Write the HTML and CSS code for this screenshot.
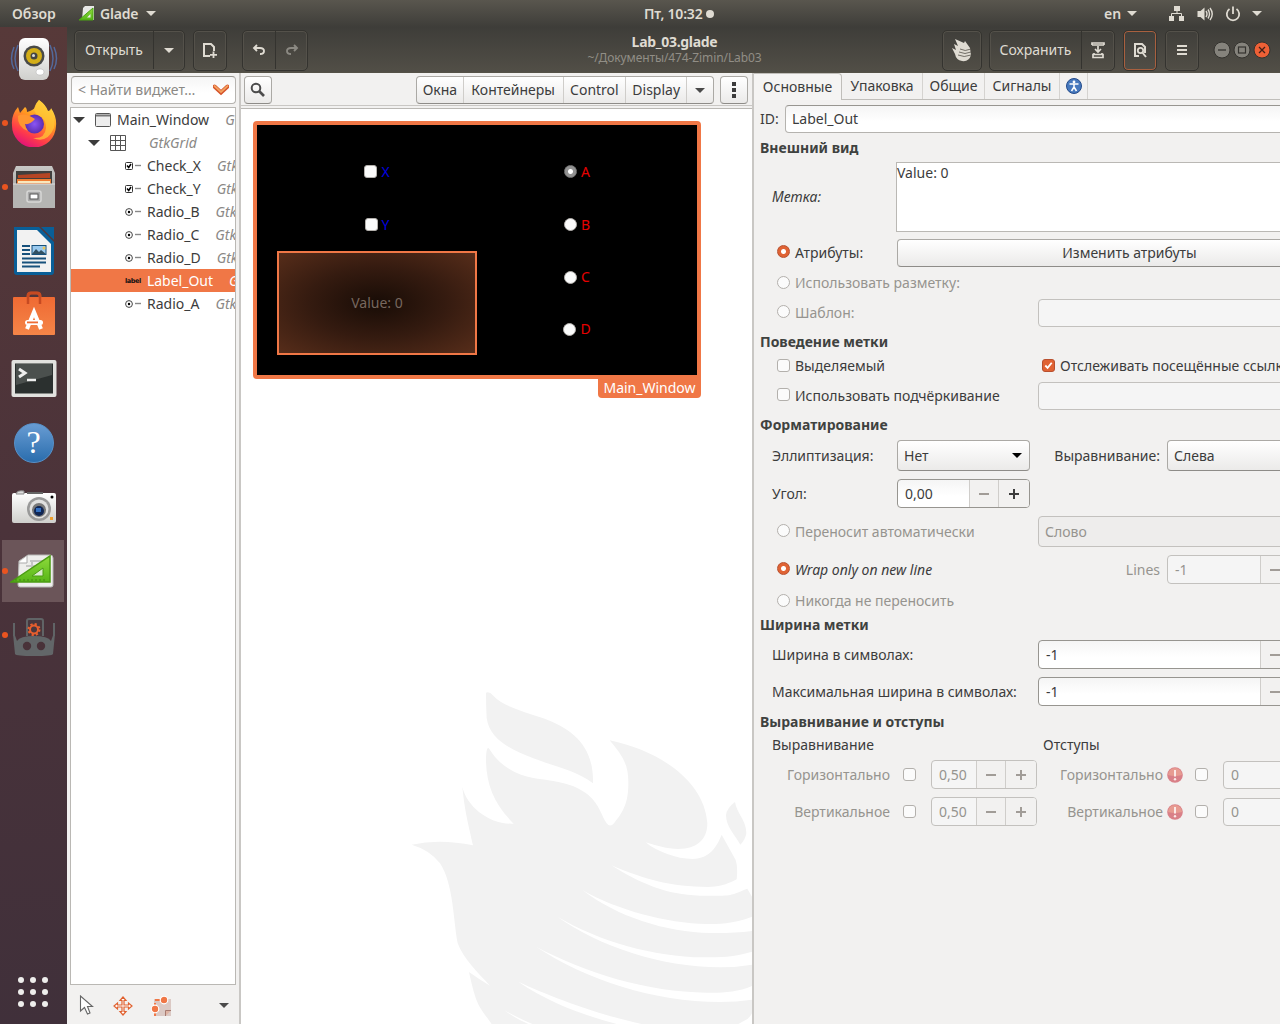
FILE: index.html
```html
<!DOCTYPE html>
<html lang="ru">
<head>
<meta charset="utf-8">
<title>Lab_03.glade</title>
<link rel="stylesheet" href="styles.css">
</head>
<body>
<svg class="defs" width="0" height="0">
  <defs>
    <linearGradient id="white" x2="0" y2="1"><stop stop-color="#fff"/><stop offset="1" stop-color="#cfcfcc"/></linearGradient>
    <linearGradient id="grey" x2="0" y2="1"><stop stop-color="#c8c8c6"/><stop offset="1" stop-color="#8f8f8d"/></linearGradient>
    <linearGradient id="fire" x1=".8" y1="0" x2=".3" y2="1"><stop stop-color="#fff44f"/><stop offset=".4" stop-color="#ff9a20"/><stop offset=".75" stop-color="#ff3b4a"/><stop offset="1" stop-color="#e0107c"/></linearGradient>
    <radialGradient id="globe"><stop stop-color="#8a55f5"/><stop offset="1" stop-color="#5b2db0"/></radialGradient>
    <linearGradient id="blue" x2="0" y2="1"><stop stop-color="#699fd6"/><stop offset="1" stop-color="#2a6dae"/></linearGradient>
    <linearGradient id="green" x2="0" y2="1"><stop stop-color="#8edb3c"/><stop offset="1" stop-color="#58b618"/></linearGradient>
    <linearGradient id="bag" x2="0" y2="1"><stop stop-color="#ef6a33"/><stop offset="1" stop-color="#f58548"/></linearGradient>
    <symbol id="down" viewBox="0 0 10 5"><path d="M0 0H10L5 5Z" fill="currentColor"/></symbol>
    <symbol id="check-row" viewBox="0 0 16 8"><rect x=".5" y=".5" width="7" height="7" rx="1" fill="#fff" stroke="#333"/><path d="M2 3.5L3.7 5.5L6 2" stroke="#000" stroke-width="1.5" fill="none"/><path d="M10 3.5H16" stroke="#888" stroke-width="1.4"/></symbol>
    <symbol id="radio-row" viewBox="0 0 16 8"><circle cx="4" cy="4" r="3.4" fill="#fff" stroke="#444"/><circle cx="4" cy="4" r="1.2"/><path d="M10 3.5H16" stroke="#888" stroke-width="1.4"/></symbol>
    <symbol id="alert" viewBox="0 0 16 16"><circle cx="8" cy="8" r="7.8" fill="#d98088"/><path d="M1 8A7 7 0 0 1 15 8Q8 10 1 8" fill="#e79b91"/><path d="M8 3V9.5" stroke="#fbe9e7" stroke-width="2"/><circle cx="8" cy="12.2" r="1.2" fill="#fbe9e7"/></symbol>
  </defs>
</svg>
<div class="desktop">
  <header class="topbar">
    <span class="activities">Обзор</span>
    <svg class="app-icon" viewBox="0 0 16 16"><path d="M4 2L6 0H15V14H3Z" fill="#e8e8e6"/><path d="M0 14L14 2V14Z" fill="url(#green)" stroke="#4aa312"/><path d="M8 11.500L11.500 8V11.500Z" fill="#eee"/></svg>
    <span class="app-name">Glade</span>
    <svg class="arrow" viewBox="0 0 10 5"><use href="#down"/></svg>
    <span class="clock">Пт, 10:32 <i></i></span>
    <span class="lang">en</span>
    <svg class="arrow" viewBox="0 0 10 5"><use href="#down"/></svg>
    <svg class="net" viewBox="0 0 16 16" fill="#dfdbd2"><path d="M5 0H11V5H5ZM0 10H5V15H0ZM10 10H15V15H10Z"/><path d="M8 5V7.500M2.500 10V7.500H12.500V10" stroke="#dfdbd2" fill="none"/></svg>
    <svg class="vol" viewBox="0 0 16 16" fill="#dfdbd2"><path d="M0 5H3L7 1.500V14.500L3 11H0Z"/><path d="M8.500 5Q10.500 8 8.500 11M10.500 3.500Q13.500 8 10.500 12.500M12.500 2Q17 8 12.500 14" stroke="#dfdbd2" stroke-width="1.400" fill="none"/></svg>
    <svg class="power" viewBox="0 0 16 16" fill="none" stroke="#dfdbd2" stroke-width="1.800"><path d="M4.500 3A6.200 6.200 0 1 0 11.500 3M8 .500V8"/></svg>
    <svg class="arrow" viewBox="0 0 10 5"><use href="#down"/></svg>
  </header>

  <nav class="dock">
    <div class="dock-item"><svg viewBox="0 0 48 48"><path d="M4 12Q-1 24 4 34M8 10Q2 24 8 36M44 12Q49 24 44 34M40 10Q46 24 40 36" stroke="#53699b" stroke-width="1.500" fill="none"/><rect x="9" y="3" width="30" height="42" rx="6" fill="url(#white)"/><circle cx="24" cy="21" r="10.500" fill="#494a48"/><circle cx="24" cy="21" r="8" fill="#d3ae18"/><circle cx="24" cy="21" r="3.500" fill="#444"/><circle cx="23.500" cy="20.500" r="1.500" fill="#ddd"/><rect x="26" y="34" width="8" height="6" rx="3" fill="#fff" stroke="#bbb" stroke-width=".6"/></svg></div>
    <div class="dock-item running"><svg viewBox="0 0 48 48"><path d="M29 1Q36 6 38 12Q41 12 41 9Q47 18 46 27A22 22 0 0 1 2 26Q1 16 8 8L10 14L15 8Q17 9 17 13Q24 11 25 8Q26 4 29 1Z" fill="url(#fire)"/><circle cx="24.500" cy="25" r="9.500" fill="url(#globe)"/><path d="M29 1Q19 12 30 17Q36 20 36 29Q35 40 23 39Q37 45 44 29Q46 22 41 10L38 13Q35 5 29 1Z" fill="#ffc536" opacity=".75"/><path d="M8 17Q14 13 25 20Q20 26 15 25Q15 28 18 32Q7 28 8 17Z" fill="#ff9630"/></svg></div>
    <div class="dock-item running"><svg viewBox="0 0 48 48"><path d="M6 3H42L45 10V44H3V10Z" fill="url(#grey)"/><rect x="6" y="8" width="36" height="15" fill="#413f3d"/><path d="M8 12L40 10V15H8Z" fill="#b54524"/><path d="M7 16H41V23H7Z" fill="#ef7e33"/><path d="M8 18H40V20H8Z" fill="#f8e7bd"/><path d="M3 21H45V45H3Z" fill="#b5b5b3"/><path d="M3 21H45" stroke="#ddd"/><rect x="17" y="28" width="14" height="11" rx="2" fill="#aaa" stroke="#d8d8d6" stroke-width="1.500"/><rect x="20" y="31" width="8" height="5" fill="#fff" stroke="#555"/></svg></div>
    <div class="dock-item"><svg viewBox="0 0 48 48"><path d="M4 0H29L44 15V45Q44 48 41 48H7Q4 48 4 45Z" fill="#095f98"/><path d="M31 0H44V13Z" fill="#095f98"/><path d="M7 3H27L41 17V45H7Z" fill="#f2f2f2"/><path d="M12 19H20M12 23H20M12 27H20M12 31.500H36M12 35.500H36M12 39.500H30" stroke="#17517c" stroke-width="2"/><rect x="22" y="18.500" width="14" height="9" fill="#99c9ee" stroke="#17517c"/><path d="M22 27L26 22L29 25L31 23L36 27Z" fill="#315062"/><circle cx="34" cy="21" r="1.500" fill="#ecc657"/></svg></div>
    <div class="dock-item"><svg viewBox="0 0 48 48"><path d="M18 14V5Q18 2 21 2H27Q30 2 30 5V14" stroke="#c64a22" stroke-width="3" fill="none"/><rect x="3" y="6" width="42" height="38" rx="1" fill="url(#bag)"/><path d="M18 13V5Q18 2 21 2H27Q30 2 30 5V13" stroke="#c64a22" stroke-width="2.500" fill="none"/><path d="M17 38L24 21L31 38" fill="none" stroke="#fff" stroke-width="4"/><rect x="15" y="29" width="18" height="5" rx="2.500" fill="#fff"/><rect x="17" y="30.500" width="11" height="1.800" fill="#ee6c35"/></svg></div>
    <div class="dock-item"><svg viewBox="0 0 48 48"><rect x="1.500" y="5" width="45" height="37" rx="2" fill="#e2e2df"/><rect x="5" y="8.500" width="38" height="30" fill="#2b302f"/><path d="M6 9H42V20L6 30Z" fill="#4b504e"/><path d="M9 14L15 18L9 22" fill="none" stroke="#eee" stroke-width="3"/><path d="M17 25H26" stroke="#eee" stroke-width="2.500"/></svg></div>
    <div class="dock-item"><div class="help-icon">?</div></div>
    <div class="dock-item"><svg viewBox="0 0 48 48"><rect x="2" y="10" width="44" height="30" rx="2" fill="url(#white)"/><path d="M6 11Q7 7 14 8V11Z" fill="#ddd" stroke="#888"/><path d="M17 10H33" stroke="#666" stroke-width="2"/><circle cx="29" cy="26" r="12" fill="#999"/><circle cx="29" cy="26" r="9.500" fill="#e0e0df"/><circle cx="29" cy="27" r="7" fill="#777"/><circle cx="29" cy="28" r="5" fill="#102654"/><path d="M26 25H31V29H26Z" fill="#326fc1"/><circle cx="42" cy="14" r="1.500"/><rect x="40" y="34" width="3" height="3" fill="#f0a02d"/></svg></div>
    <div class="dock-item running active"><svg viewBox="0 0 48 48"><path d="M9 14L18 8H40Q43 8 43 11V38Q43 40 41 40H10Q8 40 8 38Z" fill="#eeeeec" stroke="#b8b8b6"/><path d="M17 9V16H9" fill="#fff" stroke="#aaa"/><path d="M20 14H34M16 19H30M22 13V26" stroke="#c5c5c4" stroke-width="2"/><path d="M1 35L40 9V35Z" fill="url(#green)" stroke="#4b9c12" stroke-width="1.500"/><path d="M22 29L33 21V29Z" fill="#dcebd1" stroke="#4b9c12"/><path d="M6 34V32M10 34V32M14 34V32M18 34V32M22 34V32M26 34V32M30 34V32M34 34V32" stroke="#3d7c12" stroke-width=".8"/></svg></div>
    <div class="dock-item running"><svg viewBox="0 0 48 48"><path d="M5 43L3 23H4.500L7 30Q10 25 24 25Q38 25 41 30L43.500 23H45L43 43Q42 45 24 45Q6 45 5 43Z" fill="#626668"/><path d="M4 12V25M44 12V25M17 25V10Q17 8 19 8H31Q33 8 33 10V25" fill="#49383e" stroke="#606466" stroke-width="2"/><circle cx="24" cy="18.500" r="4" fill="none" stroke="#e85f2e" stroke-width="2"/><circle cx="24" cy="18.500" r="5.500" fill="none" stroke="#e85f2e" stroke-width="2" stroke-dasharray="2.200 2.120"/><circle cx="17" cy="35" r="4.200" fill="#493239"/><circle cx="31" cy="35" r="4.200" fill="#493239"/></svg></div>
    <svg class="apps" viewBox="0 0 30 30" fill="#eeeeec"><circle cx="3" cy="3" r="3"/><circle cx="15" cy="3" r="3"/><circle cx="27" cy="3" r="3"/><circle cx="3" cy="15" r="3"/><circle cx="15" cy="15" r="3"/><circle cx="27" cy="15" r="3"/><circle cx="3" cy="27" r="3"/><circle cx="15" cy="27" r="3"/><circle cx="27" cy="27" r="3"/></svg>
  </nav>

  <div class="window">
    <header class="headerbar">
      <div class="hgroup open"><span class="hopen">Открыть</span><span class="hdrop"><svg class="arrow" viewBox="0 0 10 5"><use href="#down"/></svg></span></div>
      <div class="hgroup new"><svg width="16" height="16" viewBox="0 0 16 16" fill="none" stroke="#dfdbd2" stroke-width="2"><path d="M8 14H2V2H9L12 5V9" /><path d="M11.500 9.500V16M8 12.800H15" stroke-width="1.800"/></svg></div>
      <div class="hgroup undo"><span><svg width="14" height="12" viewBox="0 0 14 12" fill="none" stroke="#dfdbd2" stroke-width="1.900"><path d="M5 1L2 4L5 7M2 4H8Q12 4 12 7Q12 10 8 10"/></svg></span><span class="dim"><svg width="14" height="12" viewBox="0 0 14 12" fill="none" stroke="#8b8982" stroke-width="1.900"><path d="M9 1L12 4L9 7M12 4H6Q2 4 2 7Q2 10 6 10"/></svg></span></div>
      <div class="titles"><b>Lab_03.glade</b><small>~/Документы/474-Zimin/Lab03</small></div>
      <div class="hgroup logo"><svg width="20" height="24" viewBox="0 0 20 24"><path d="M3 1L12 5L13 3L18 10L19 17Q17 24 10 23Q4 22 3 16L0 10L4 12L2 6L6 8Z" fill="#dfdbd2"/><path d="M8 11Q13 14 19 11M7 14Q13 17 19 14M6 17Q12 20 19 17" fill="none" stroke="#55524a" stroke-width=".8"/></svg></div>
      <div class="hgroup save"><span class="hsave">Сохранить</span><span class="hsaveas"><svg width="14" height="17" viewBox="0 0 14 17" fill="none" stroke="#dfdbd2" stroke-width="1.700"><path d="M1 3V1H13V3M1 3H13M7 4V10M4 7L7 10L10 7M3 11V12M11 11V12M2 12.500H12V15.500H2Z"/></svg></span></div>
      <div class="hgroup preview"><svg width="14" height="16" viewBox="0 0 14 16"><path d="M6 14H2V2H9L12 5V11" fill="none" stroke="#dfdbd2" stroke-width="2"/><circle cx="7.500" cy="8.500" r="2.700" fill="none" stroke="#dfdbd2" stroke-width="1.800"/><path d="M9 10L13 15" stroke="#dfdbd2" stroke-width="2"/></svg></div>
      <div class="hgroup menu"><svg width="10" height="12" viewBox="0 0 10 12"><path d="M0 2H10M0 6H10M0 10H10" stroke="#dfdbd2" stroke-width="2"/></svg></div>
      <div class="winbtns">
        <svg viewBox="0 0 18 18"><circle cx="9" cy="9" r="8" fill="#85837c" stroke="#34332f"/><path d="M5 9H13" stroke="#34332f" stroke-width="1.300"/></svg>
        <svg viewBox="0 0 18 18"><circle cx="9" cy="9" r="8" fill="#85837c" stroke="#34332f"/><rect x="5.500" y="6" width="7" height="6" fill="none" stroke="#34332f" stroke-width="1.200"/></svg>
        <svg viewBox="0 0 18 18"><circle cx="9" cy="9" r="8" fill="#ed6036" stroke="#34332f"/><path d="M6 6L12 12M12 6L6 12" stroke="#402018" stroke-width="1.300"/></svg>
      </div>
    </header>

    <div class="panes">
      <aside class="inspector">
        <div class="entry search"><span>&lt; Найти виджет…</span><svg width="16" height="12" viewBox="0 0 16 12"><path d="M1.500 2.500L8 8.500L14.500 2.500" fill="none" stroke="#d5522a" stroke-width="4" stroke-linecap="round"/><path d="M1.500 2L8 8L14.500 2" fill="none" stroke="#f2a15f" stroke-width="1.800" stroke-linecap="round"/></svg></div>
        <div class="tree">
          <div class="trow l0"><svg class="exp" viewBox="0 0 12 6"><path d="M0 0H12L6 6Z" fill="#3c3c3c"/></svg><svg class="tico" viewBox="0 0 16 14"><rect x=".5" y=".5" width="15" height="13" rx="1" fill="#ededed" stroke="#555"/><path d="M1 2.500H15" stroke="#777" stroke-width="2"/></svg><span class="tname">Main_Window</span><em>GtkWindow</em></div>
          <div class="trow l1"><svg class="exp" viewBox="0 0 12 6"><path d="M0 0H12L6 6Z" fill="#3c3c3c"/></svg><svg class="tico grid" viewBox="0 0 16 16"><path d="M.5 .5H15.500V15.500H.5ZM5.500 .5V15.500M10.500 .5V15.500M.5 5.500H15.500M.5 10.500H15.500" fill="none" stroke="#555"/></svg><em>GtkGrid</em></div>
          <div class="trow l2"><svg class="wico" viewBox="0 0 16 8"><use href="#check-row"/></svg><span class="tname">Check_X</span><em>GtkCheckButton</em></div>
          <div class="trow l2"><svg class="wico" viewBox="0 0 16 8"><use href="#check-row"/></svg><span class="tname">Check_Y</span><em>GtkCheckButton</em></div>
          <div class="trow l2"><svg class="wico" viewBox="0 0 16 8"><use href="#radio-row"/></svg><span class="tname">Radio_B</span><em>GtkRadioButton</em></div>
          <div class="trow l2"><svg class="wico" viewBox="0 0 16 8"><use href="#radio-row"/></svg><span class="tname">Radio_C</span><em>GtkRadioButton</em></div>
          <div class="trow l2"><svg class="wico" viewBox="0 0 16 8"><use href="#radio-row"/></svg><span class="tname">Radio_D</span><em>GtkRadioButton</em></div>
          <div class="trow l2 selected"><b class="mini">label</b><span class="tname">Label_Out</span><em>GtkLabel</em></div>
          <div class="trow l2"><svg class="wico" viewBox="0 0 16 8"><use href="#radio-row"/></svg><span class="tname">Radio_A</span><em>GtkRadioButton</em></div>
        </div>
        <div class="tools">
          <svg width="16" height="21" viewBox="0 0 16 21"><path d="M1.500 1V16L5.500 12.500L8.500 19L11 18L8.500 11.500H13.500Z" fill="#fff" stroke="#666" stroke-width="1.100"/></svg>
          <svg width="20" height="20" viewBox="0 0 20 20"><path d="M10 1L13 4.500H11V9H15.500V7L19 10L15.500 13V11H11V15.500H13L10 19L7 15.500H9V11H4.500V13L1 10L4.500 7V9H9V4.500H7Z" fill="#fff" stroke="#e0612f" stroke-width="1.200"/></svg>
          <svg width="20" height="20" viewBox="0 0 20 20"><path d="M3 3H20V20H3Z" fill="#dbc9c4"/><path d="M4 20V4H19" stroke="#f07746" stroke-width="2" stroke-dasharray="5 3" fill="none"/><path d="M14.500 20V14.500H20" fill="#dfb3a3" stroke="#a77b70"/><circle cx="13" cy="4" r="3.800" fill="#f07746" stroke="#fff" stroke-width="1.200"/><circle cx="4" cy="13" r="3.800" fill="#f07746" stroke="#fff" stroke-width="1.200"/></svg>
          <svg class="arrow dark" viewBox="0 0 10 5"><use href="#down"/></svg>
        </div>
      </aside>

      <main class="editor">
        <div class="palette">
          <div class="btn find"><svg width="16" height="16" viewBox="0 0 16 16"><circle cx="6" cy="6" r="4.300" fill="none" stroke="#4c4c4c" stroke-width="2"/><path d="M9 9L14 14" stroke="#4c4c4c" stroke-width="2.600"/></svg></div>
          <div class="btn cats"><span>Окна</span><span>Контейнеры</span><span>Control</span><span>Display</span><span><svg class="arrow dark" viewBox="0 0 10 5"><use href="#down"/></svg></span></div>
          <div class="btn more"><svg width="4" height="16" viewBox="0 0 4 16"><path d="M0 0H4V4H0ZM0 6H4V10H0ZM0 12H4V16H0Z" fill="#3c3c3c"/></svg></div>
        </div>
        <div class="canvas">
          <div class="design">
            <div class="cell blue"><i class="chk"></i>X</div><div class="cell red"><i class="rad off"></i>A</div>
            <div class="cell blue"><i class="chk"></i>Y</div><div class="cell red"><i class="rad"></i>B</div>
            <div class="picked">Value: 0</div><div class="cell red"><i class="rad"></i>C</div>
            <div class="cell red"><i class="rad"></i>D</div>
          </div>
          <div class="nametag">Main_Window</div>
          <svg class="watermark" viewBox="0 0 1056 1032" fill="#f2f2f2">
            <path d="M258 38Q268 34 280 47C310 80 370 94 430 115C520 148 582 200 579 310C530 272 480 265 400 235C330 207 270 180 260 115Q258 80 258 38Z"/>
            <path d="M1005 366C1010 400 1039 420 1039 460Q1036 480 1021 494C1005 465 978 440 978 405Q980 385 1005 366Z"/>
            <path d="M268 207C300 260 350 285 400 294C470 305 520 308 565 345C600 375 605 410 620 430Q630 443 642 430C670 395 685 370 685 310C686 250 665 225 629 181C790 215 915 310 922 430C922 480 890 507 835 507C800 507 770 497 737 487C770 515 830 537 878 537C930 535 950 500 965 464L1007 540Q1014 560 1010 598C980 615 950 621 925 621C810 620 740 600 634 556C720 610 800 645 900 647C1000 648 985 648 1042 626L1056 650V710C1000 732 950 732 920 732C800 730 650 690 547 630C650 710 800 757 930 759Q1000 760 1056 753V815C1000 832 960 832 910 832C760 830 600 785 472 710C600 800 780 860 960 862Q1010 862 1056 854V918C1010 938 960 939 920 938C740 935 560 880 408 800C560 900 760 965 960 966Q1010 966 1056 959V1000Q1045 1020 1030 1024L1015 1032H725C600 1005 450 950 355 905C450 970 550 1005 650 1032H397Q350 1012 312 990Q350 1018 385 1032H275C235 975 230 980 207 876Q240 900 270 917C230 875 190 835 173 790C160 720 160 610 120 550Q90 510 35 494Q120 475 219 496C205 430 195 400 187 320C200 380 270 435 341 431C280 370 257 310 258 230Q260 195 268 207Z"/>
          </svg>
        </div>
      </main>

      <section class="props">
        <div class="tabs">
          <span class="tab current">Основные</span><span class="tab">Упаковка</span><span class="tab">Общие</span><span class="tab">Сигналы</span>
          <span class="tab"><svg width="16" height="16" viewBox="0 0 16 16"><circle cx="8" cy="8" r="7.500" fill="#4678bd" stroke="#244b8a"/><circle cx="8" cy="4" r="1.400" fill="#fff"/><path d="M3.500 6H12.500M8 6V9L5.500 13M8 9L10.500 13" stroke="#fff" stroke-width="1.500" fill="none"/></svg></span>
        </div>
        <div class="form">
          <div class="row"><span class="id">ID:</span><div class="entry fill">Label_Out</div></div>
          <div class="row"><b>Внешний вид</b></div>
          <div class="row in"><em class="c1">Метка:</em><div class="text">Value: 0</div></div>
          <div class="row in"><span class="c1"><i class="rad on"></i>Атрибуты:</span><div class="btn attrs">Изменить атрибуты</div></div>
          <div class="row in dim"><span class="c2"><i class="rad"></i>Использовать разметку:</span></div>
          <div class="row in dim"><span class="c2"><i class="rad"></i>Шаблон:</span><div class="entry fill off"></div></div>
          <div class="row"><b>Поведение метки</b></div>
          <div class="row in"><span class="c2"><i class="chk"></i>Выделяемый</span><i class="chk on visited"><svg viewBox="0 0 12 12"><path d="M2.500 6L5 8.500L9.500 3" stroke="#fff" stroke-width="2" fill="none"/></svg></i>Отслеживать посещённые ссылки</div>
          <div class="row in"><span class="c2"><i class="chk"></i>Использовать подчёркивание</span><div class="entry fill off"></div></div>
          <div class="row"><b>Форматирование</b></div>
          <div class="row in"><span class="c1">Эллиптизация:</span><div class="btn combo">Нет<svg class="arrow black" viewBox="0 0 10 5"><use href="#down"/></svg></div><span class="rlabel">Выравнивание:</span><div class="btn combo fill">Слева</div></div>
          <div class="row in"><span class="c1">Угол:</span><div class="spin angle"><span>0,00</span><i class="dimsign"><u></u></i><i class="plus"><u></u></i></div></div>
          <div class="row in dim"><span class="c2"><i class="rad"></i>Переносит автоматически</span><div class="btn combo fill off">Слово</div></div>
          <div class="row in"><em class="c2"><i class="rad on"></i>Wrap only on new line</em><span class="lines dim">Lines</span><div class="spin off wide lspin"><span>-1</span><i><u></u></i></div></div>
          <div class="row in dim"><span class="c2"><i class="rad"></i>Никогда не переносить</span></div>
          <div class="row"><b>Ширина метки</b></div>
          <div class="row in"><span class="c2">Ширина в символах:</span><div class="spin wide"><span>-1</span><i class="dimsign"><u></u></i></div></div>
          <div class="row in"><span class="c2">Максимальная ширина в символах:</span><div class="spin wide"><span>-1</span><i class="dimsign"><u></u></i></div></div>
          <div class="row"><b>Выравнивание и отступы</b></div>
          <div class="row in"><span class="c3">Выравнивание</span>Отступы</div>
          <div class="row in dim"><span class="al">Горизонтально</span><i class="chk"></i><div class="spin off half"><span>0,50</span><i><u></u></i><i class="plus"><u></u></i></div><span class="pad">Горизонтально</span><svg class="alert" viewBox="0 0 16 16"><use href="#alert"/></svg><i class="chk"></i><div class="entry off margin">0</div></div>
          <div class="row in dim"><span class="al">Вертикальное</span><i class="chk"></i><div class="spin off half"><span>0,50</span><i><u></u></i><i class="plus"><u></u></i></div><span class="pad">Вертикальное</span><svg class="alert" viewBox="0 0 16 16"><use href="#alert"/></svg><i class="chk"></i><div class="entry off margin">0</div></div>
        </div>
      </section>
    </div>
  </div>
</div>
</body>
</html>
```
FILE: styles.css
```css
* { box-sizing: border-box; }
body { margin: 0; font: 14px/20px "Noto Sans", "Open Sans", sans-serif; color: #3c3c3c; overflow: hidden; }
svg { display: block; flex: none; }
.defs { position: absolute; }
.desktop { width: 1280px; height: 1024px; display: grid; grid-template: 27px 997px / 67px 1213px; overflow: hidden; white-space: nowrap; }

.topbar { grid-column: 1 / 3; display: flex; align-items: center; background: linear-gradient(#59564e, #3e3d39); color: #dfdbd2; font-weight: 600; padding-left: 12px; }
.activities { width: 67px; }
.app-icon { width: 16px; height: 16px; }
.app-name { margin-left: 5px; width: 41px; letter-spacing: -.2px; }
.arrow { width: 10px; height: 5px; color: #dfdbd2; }
.arrow.dark { color: #4a4a4a; }
.arrow.black { color: #000; margin-left: auto; }
.topbar > .arrow { margin-left: 5px; }
.clock { margin-left: 488px; width: 460px; display: flex; align-items: center; gap: 4px; letter-spacing: -.2px; }
.clock i { width: 8px; height: 8px; border-radius: 50%; background: #dfdbd2; }
.lang { width: 18px; }
.net { width: 16px; height: 16px; margin-left: 32px; }
.vol { width: 17px; height: 16px; margin-left: 12px; }
.power { width: 16px; height: 16px; margin-left: 11px; }
.topbar > .power + .arrow { margin-left: 11px; }

.dock { background: linear-gradient(175deg, #573939, #4b333a 50%, #40303a); display: flex; flex-direction: column; }
.dock-item { width: 67px; height: 64px; display: grid; place-items: center; position: relative; }
.dock-item > svg { width: 48px; height: 48px; }
.dock-item.active { background: linear-gradient(#6b5559, #6b5559) 2px 1px / 62px 62px no-repeat; }
.dock-item.running::before { content: ""; position: absolute; left: 2px; top: 29px; width: 6px; height: 6px; border-radius: 50%; background: #e95420; }
.help-icon { width: 40px; height: 40px; border-radius: 50%; border: 1px solid #5791c9; background: linear-gradient(#689cd3, #2a6dad); color: #fff; font: 32px/37px "Liberation Serif", serif; text-align: center; }
.apps { width: 30px; height: 30px; margin: auto 0 17px 18px; }

.window { display: flex; flex-direction: column; background: #f2f1f0; }
.headerbar { height: 46px; flex: none; display: flex; align-items: center; background: linear-gradient(#3e3d39, #524f47); padding-left: 7px; color: #dfdbd2; box-shadow: inset 0 -1px #555248; }
.hgroup { height: 41px; border: 1px solid #34332f; border-radius: 5px; box-shadow: inset 0 0 0 1px #54514a; display: flex; align-items: center; justify-content: center; }
.hgroup > span { height: 38px; display: flex; align-items: center; justify-content: center; }
.hgroup > span + span { border-left: 1px solid #34332f; }
.open { width: 111px; } .hopen { width: 78px; } .hdrop { flex: 1; }
.new { width: 34px; margin-left: 8px; }
.undo { width: 66px; margin-left: 15px; } .undo span { width: 32px; }
.titles { margin-left: 273px; width: 187px; padding-right: 0; display: flex; flex-direction: column; align-items: center; line-height: 16px; }
.titles b { letter-spacing: -.3px; }
.titles small { font-size: 12px; color: #918e86; letter-spacing: -.1px; }
.headerbar .logo { width: 40px; margin-left: 174px; }
.save { width: 126px; margin-left: 7px; } .hsave { flex: 1; } .hsaveas { width: 33px; }
.preview { width: 34px; margin-left: 8px; border-color: #34332f; box-shadow: inset 0 0 0 1px #a9603f; }
.menu { width: 34px; margin-left: 8px; }
.winbtns { display: flex; gap: 2px; margin-left: 14px; height: 34px; align-items: center; padding-left: 0; }
.winbtns svg { width: 18px; height: 18px; }

.panes { flex: 1; display: grid; grid-template-columns: 172px 513px 1fr; min-height: 0; }
.inspector { display: flex; flex-direction: column; padding: 3px 4px 0 3px; min-width: 0; }
.panes > * + * { border-left: 2px solid #c9c7c4; }
.entry { height: 28px; border: 1px solid #b5b3af; border-top-color: #979590; border-radius: 4px; background: linear-gradient(#f5f5f5, #fff 60%); display: flex; align-items: center; padding: 0 6px; }
.search { width: 165px; margin-left: 1px; color: #8b8985; justify-content: space-between; }
.tree { margin-top: 3px; width: 166px; height: 878px; border: 1px solid #bab8b4; background: #fff; overflow: hidden; }
.trow { height: 23px; display: flex; align-items: center; }
.trow em { color: #8a8886; margin-left: 16px; }
.l0 { padding-left: 2px; } .l1 { padding-left: 17px; } .l2 { padding-left: 54px; }
.exp { width: 12px; height: 6px; margin-right: 10px; }
.tico { width: 16px; height: 14px; margin-right: 6px; }
.tico.grid { height: 16px; margin-right: 7px; }
.wico { width: 16px; height: 8px; margin-right: 6px; }
.mini { width: 16px; margin-right: 6px; font: bold 6.500px/8px "DejaVu Sans", sans-serif; color: #111; letter-spacing: -.4px; }
.selected, .selected em { color: #fff; background: #f07746; }
.tools { flex: 1; display: flex; align-items: center; padding: 2px 6px 0 9px; gap: 18px; }
.tools .arrow { margin-left: auto; }

.editor { display: flex; flex-direction: column; min-width: 0; }
.palette { height: 36px; padding: 3px 4px 0 3px; display: flex; border-bottom: 1px solid #bab8b4; box-shadow: inset 0 -2px #f2f1f0, inset 0 -3px #c9c7c4; }
.btn { height: 28px; border: 1px solid #aba9a5; border-bottom-color: #8e8c88; border-radius: 4px; background: linear-gradient(#fff, #ebeae9); display: flex; align-items: center; justify-content: center; }
.find { width: 28px; }
.cats { margin-left: auto; width: 298px; }
.cats span { height: 26px; display: flex; align-items: center; justify-content: center; width: 63px; }
.cats span:nth-child(1) { width: 46px; }
.cats span:nth-child(2) { width: 100px; }
.cats span:nth-child(4) { width: 61px; }
.cats span:last-child { width: 27px; }
.cats span + span { border-left: 1px solid #cfcdca; }
.more { width: 28px; margin-left: 6px; }
.canvas { flex: 1; background: #fff; display: flex; flex-direction: column; padding: 12px 0 0 12px; min-height: 0; }
.design { width: 448px; height: 258px; flex: none; border: 4px solid #f07746; border-radius: 4px 4px 0 4px; padding: 20px; background: #000; display: grid; grid-template: 53px 53px 52px 52px / 200px 200px; font-size: 14px; }
.cell { display: flex; align-items: center; justify-content: center; gap: 4px; }
.blue { color: #0000e0; } .red { color: #e80000; }
.picked { grid-row: 3 / 5; border: 2px solid #f07746; background: radial-gradient(ellipse farthest-corner, #180c06 0, #351b10 50%, #572d1a 100%); color: #77675e; display: grid; place-items: center; }
.nametag { height: 20px; width: 103px; flex: none; margin-left: 345px; margin-top: -1px; background: #f07746; color: #fff; border-radius: 0 0 4px 4px; text-align: center; }
.watermark { width: 352px; height: 344px; margin: auto 0 0 auto; }

.chk, .rad { width: 13px; height: 13px; flex: none; border: 1px solid #b3b0ac; background: #fbfbfb; border-radius: 3px; display: inline-block; }
.rad { border-radius: 50%; }
.rad.on { border: 1px solid #b8502f; background: radial-gradient(circle, #fff 2px, #e06334 3px); }
.rad.off { border-color: #777; background: radial-gradient(circle, #fff 2px, #929292 3px); }
.chk.on { background: #e06334; border-color: #b8502f; }
.chk.on svg { width: 11px; height: 11px; }

.tabs { height: 27px; display: flex; border-bottom: 1px solid #c0beba; }
.tab { border-right: 1px solid #d5d3d0; display: flex; align-items: center; justify-content: center; width: 81px; }
.tab.current { width: 88px; background: #f5f4f3; border: 1px solid #c0beba; border-width: 1px 1px 0 0; border-radius: 0 4px 0 0; height: 27px; }
.tab:nth-child(3) { width: 62px; }
.tab:nth-child(4) { width: 75px; }
.tab:nth-child(5) { width: 28px; }
.form { margin-top: 1px; display: grid; grid-template-rows: 36px 22px 76px 35px 26px 33px 26px 22px 37px 22px 39px 37px 39px 37px 26px 22px 37px 37px 24px 22px 37px 37px; }
.props { overflow: hidden; min-width: 0; }
.row { display: flex; align-items: center; padding-left: 6px; }
.row.in { padding-left: 18px; }
.row b { color: #3f423f; }
.dim { color: #96948f; }
.id { width: 25px; }
.fill { width: 500px; flex: none; }
.c1 { width: 125px; flex: none; display: flex; align-items: center; }
.c2 { width: 266px; flex: none; display: flex; align-items: center; }
.c3 { width: 271px; }
.c1 > i, .c2 > i { margin: -2px 5px 0 5px; }
.text { width: 500px; height: 70px; margin-left: -1px; border: 1px solid #bab8b4; background: #fff; flex: none; }
.attrs { width: 465px; flex: none; }
.off { border-color: #c3c1be; background: #f5f5f5; color: #96948f; }
.visited { margin: -1px 5px 0 4px; }
.combo { height: 31px; width: 133px; justify-content: flex-start; padding: 0 7px 0 6px; }
.combo.fill { width: 300px; }
.combo.off { background: #eeedec; }
.rlabel { width: 137px; text-align: right; padding-right: 7px; }
.spin { height: 29px; border: 1px solid #979590; border-radius: 4px; display: flex; background: linear-gradient(#f5f5f5, #fff 60%); overflow: hidden; flex: none; }
.spin span { padding-left: 7px; line-height: 28px; width: 71px; }
.spin i { width: 29px; border-left: 1px solid #cfcdca; background: #f2f1f0; display: grid; place-items: center; color: #3c3c3c; }
.spin i + i { flex: 1; }
.spin.off i, .dimsign { color: #a19c97 !important; }
.spin u { width: 10px; height: 2px; background: currentColor; position: relative; }
.plus u::after { content: ""; position: absolute; left: 4px; top: -4px; width: 2px; height: 10px; background: currentColor; }
.spin.off { background: #f5f5f5; border-color: #c3c1be; }
.angle { width: 133px; }
.wide { width: 300px; } .wide span { width: 221px; }
.lspin span { width: 92px; }
.lines { width: 129px; text-align: right; margin-right: 7px; margin-left: -7px; padding-right: 0; }
.half { width: 106px; margin-left: 15px; } .half span { width: 44px; }
.al { width: 118px; text-align: right; margin-right: 13px; }
.pad { width: 126px; text-align: right; margin-right: 4px; }
.alert { width: 16px; height: 16px; margin-right: 12px; }
.margin { width: 100px; margin-left: 15px; flex: none; padding-left: 7px; }
```
